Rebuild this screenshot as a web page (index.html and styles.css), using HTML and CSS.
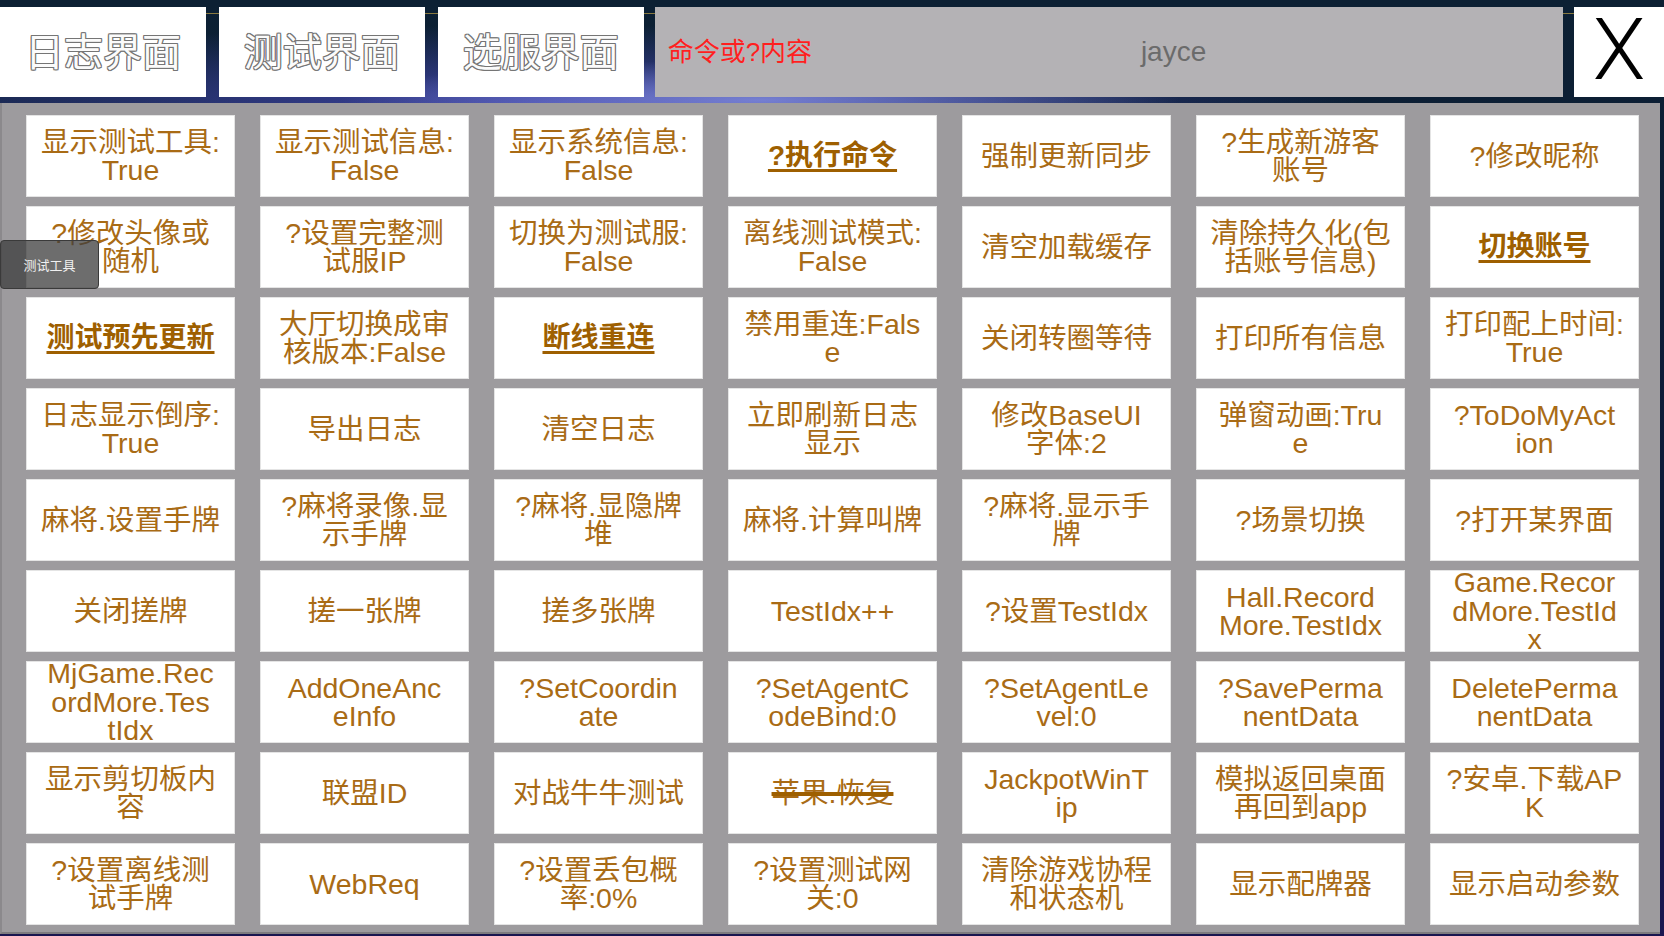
FILE: index.html
```html
<!DOCTYPE html>
<html lang="zh-CN">
<head>
    <meta charset="UTF-8">
    <title>测试工具</title>
    <link rel="stylesheet" href="styles.css">
</head>
<body>
    <div class="topbar">
        <div class="tab">日志界面</div>
        <div class="tab">测试界面</div>
        <div class="tab">选服界面</div>
        <div class="cmd-input">
            <span class="placeholder">命令或?内容</span>
            <span class="cmd-value">jayce</span>
        </div>
        <div class="close-btn">X</div>
    </div>

    <div class="panel">
        <div class="grid">
            <div class="cell">显示测试工具:<br>True</div>
            <div class="cell">显示测试信息:<br>False</div>
            <div class="cell">显示系统信息:<br>False</div>
            <div class="cell"><span class="link">?执行命令</span></div>
            <div class="cell">强制更新同步</div>
            <div class="cell">?生成新游客<br>账号</div>
            <div class="cell">?修改昵称</div>

            <div class="cell">?修改头像或<br>随机</div>
            <div class="cell">?设置完整测<br>试服IP</div>
            <div class="cell">切换为测试服:<br>False</div>
            <div class="cell">离线测试模式:<br>False</div>
            <div class="cell">清空加载缓存</div>
            <div class="cell">清除持久化(包<br>括账号信息)</div>
            <div class="cell"><span class="link">切换账号</span></div>

            <div class="cell"><span class="link">测试预先更新</span></div>
            <div class="cell">大厅切换成审<br>核版本:False</div>
            <div class="cell"><span class="link">断线重连</span></div>
            <div class="cell">禁用重连:Fals<br>e</div>
            <div class="cell">关闭转圈等待</div>
            <div class="cell">打印所有信息</div>
            <div class="cell">打印配上时间:<br>True</div>

            <div class="cell">日志显示倒序:<br>True</div>
            <div class="cell">导出日志</div>
            <div class="cell">清空日志</div>
            <div class="cell">立即刷新日志<br>显示</div>
            <div class="cell">修改BaseUI<br>字体:2</div>
            <div class="cell">弹窗动画:Tru<br>e</div>
            <div class="cell">?ToDoMyAct<br>ion</div>

            <div class="cell">麻将.设置手牌</div>
            <div class="cell">?麻将录像.显<br>示手牌</div>
            <div class="cell">?麻将.显隐牌<br>堆</div>
            <div class="cell">麻将.计算叫牌</div>
            <div class="cell">?麻将.显示手<br>牌</div>
            <div class="cell">?场景切换</div>
            <div class="cell">?打开某界面</div>

            <div class="cell">关闭搓牌</div>
            <div class="cell">搓一张牌</div>
            <div class="cell">搓多张牌</div>
            <div class="cell">TestIdx++</div>
            <div class="cell">?设置TestIdx</div>
            <div class="cell">Hall.Record<br>More.TestIdx</div>
            <div class="cell">Game.Recor<br>dMore.TestId<br>x</div>

            <div class="cell">MjGame.Rec<br>ordMore.Tes<br>tIdx</div>
            <div class="cell">AddOneAnc<br>eInfo</div>
            <div class="cell">?SetCoordin<br>ate</div>
            <div class="cell">?SetAgentC<br>odeBind:0</div>
            <div class="cell">?SetAgentLe<br>vel:0</div>
            <div class="cell">?SavePerma<br>nentData</div>
            <div class="cell">DeletePerma<br>nentData</div>

            <div class="cell">显示剪切板内<br>容</div>
            <div class="cell">联盟ID</div>
            <div class="cell">对战牛牛测试</div>
            <div class="cell"><span class="struck">苹果.恢复</span></div>
            <div class="cell">JackpotWinT<br>ip</div>
            <div class="cell">模拟返回桌面<br>再回到app</div>
            <div class="cell">?安卓.下载AP<br>K</div>

            <div class="cell">?设置离线测<br>试手牌</div>
            <div class="cell">WebReq</div>
            <div class="cell">?设置丢包概<br>率:0%</div>
            <div class="cell">?设置测试网<br>关:0</div>
            <div class="cell">清除游戏协程<br>和状态机</div>
            <div class="cell">显示配牌器</div>
            <div class="cell">显示启动参数</div>
        </div>
    </div>

    <div class="tool-toggle">测试工具</div>
</body>
</html>
```

FILE: styles.css
```css
body {
    margin: 0;
    padding: 0;
    width: 1664px;
    height: 936px;
    overflow: hidden;
    font-family: "Liberation Sans", "Noto Sans CJK SC", sans-serif;
    background:
        radial-gradient(ellipse 420px 40px at 760px 100px, rgba(140, 150, 235, 0.75), rgba(90, 80, 200, 0) 100%),
        radial-gradient(ellipse 800px 80px at 560px 105px, rgba(80, 80, 200, 0.75), rgba(40, 30, 120, 0) 100%),
        linear-gradient(180deg, #0c2033 0%, #0d1a3a 60%, #1a1650 100%);
    position: relative;
}
.topbar {
    height: 103px;
    box-sizing: border-box;
    padding-top: 7px;
    display: flex;
    align-items: flex-start;
    background: linear-gradient(180deg, transparent 13px, rgba(190, 160, 70, 0.7) 13px, rgba(190, 160, 70, 0.7) 14px, transparent 14px);
}
.tab {
    width: 206px;
    height: 90px;
    box-sizing: border-box;
    padding-bottom: 7px;
    margin-right: 13px;
    background: #fff;
    display: flex;
    align-items: center;
    justify-content: center;
    font-family: "Noto Sans CJK SC", sans-serif;
    font-size: 39px;
    color: #fbfbfb;
    text-shadow:
        1px 0 #757575, -1px 0 #757575, 0 1px #757575, 0 -1px #757575,
        1px 1px #757575, -1px -1px #757575, 1px -1px #757575, -1px 1px #757575;
}
.tab:nth-child(3) {
    margin-right: 11px;
}
.cmd-input {
    width: 909px;
    height: 90px;
    margin-right: 11px;
    background: #b4b2b5;
    display: flex;
    align-items: center;
    box-sizing: border-box;
    padding-left: 13px;
    padding-right: 28px;
}
.placeholder {
    color: #ff1f1f;
    font-size: 26px;
    margin-bottom: 6px;
}
.cmd-value {
    flex: 1;
    text-align: center;
    color: #6b6b6b;
    font-size: 28px;
}
.close-btn {
    width: 90px;
    height: 90px;
    background: #fff;
    color: #000;
    display: flex;
    align-items: center;
    justify-content: center;
    font-family: "Roboto", "Liberation Sans", sans-serif;
    font-weight: 300;
    font-size: 86px;
    line-height: 1;
    padding-bottom: 4px;
    box-sizing: border-box;
}
.panel {
    width: 1660px;
    height: 831px;
    box-sizing: border-box;
    background: #9d9b9e;
    border-left: 2px solid #8b898c;
    border-bottom: 2px solid #7d7b7e;
    padding: 12px 0 0 24px;
}
.grid {
    display: grid;
    grid-template-columns: repeat(7, 209px);
    grid-auto-rows: 82px;
    column-gap: 25px;
    row-gap: 9px;
}
.cell {
    background: #fff;
    box-shadow: inset 0 0 0 1px #e4e4e4;
    display: flex;
    align-items: center;
    justify-content: center;
    text-align: center;
    white-space: nowrap;
    color: #a96b15;
    font-size: 28.5px;
    line-height: 28.5px;
}
.link {
    font-weight: bold;
    color: #9e5f00;
    text-decoration: underline;
    text-decoration-thickness: 3px;
    text-underline-offset: 4px;
    font-size: 28px;
}
.struck {
    text-decoration: line-through;
    text-decoration-thickness: 4px;
    text-decoration-color: #9e5f00;
}
.tool-toggle {
    position: absolute;
    left: 0;
    top: 240px;
    width: 99px;
    height: 49px;
    box-sizing: border-box;
    background: rgba(60, 60, 60, 0.75);
    border: 1px solid #3a3a3a;
    border-radius: 4px;
    color: #f0f0f0;
    font-family: "Noto Sans CJK SC", sans-serif;
    font-size: 13px;
    display: flex;
    align-items: center;
    justify-content: center;
}
```
